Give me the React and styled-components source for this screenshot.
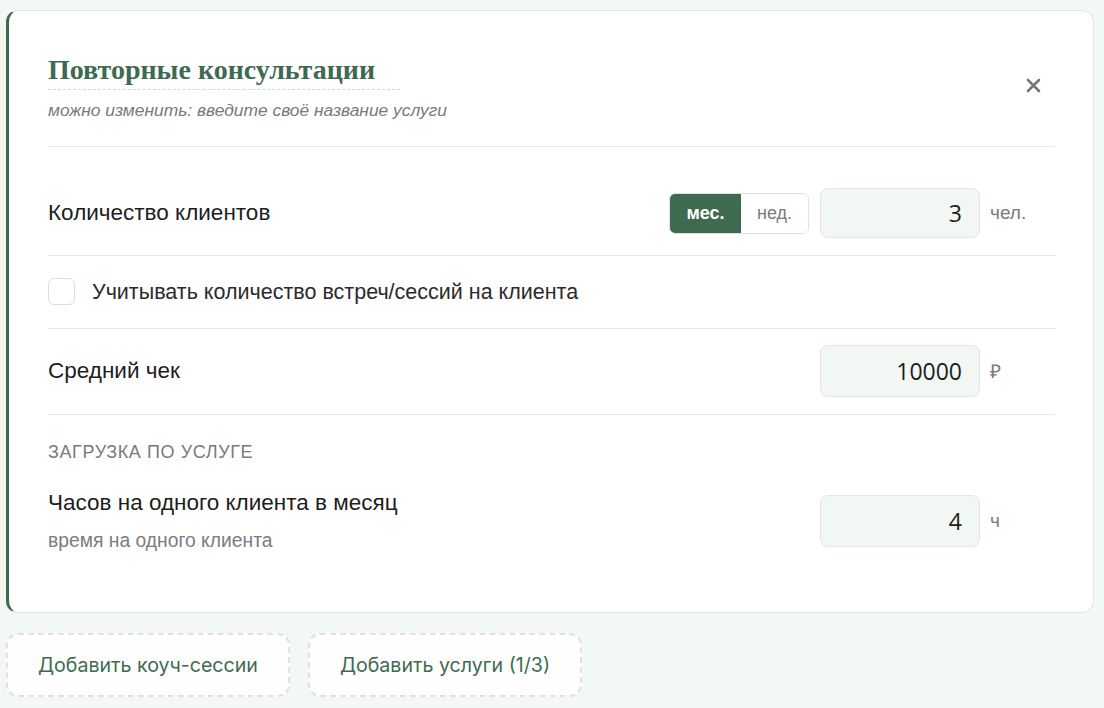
import styled, { createGlobalStyle } from 'styled-components';

const GREEN = '#3e6b50';

const GlobalStyle = createGlobalStyle`
	body {
		margin: 0;
		background: #f3f8f4;
		font-family: "Liberation Sans", Arial, sans-serif;
		color: #1d1d1d;
	}
`;

const Page = styled.div`
	padding: 10px 10px 12px 6px;
	display: flex;
	flex-direction: column;
	gap: 20px;
`;

const Card = styled.div`
	background: #fff;
	border: 1px solid #e1e7e2;
	border-left: 3px solid ${GREEN};
	border-radius: 12px;
	padding: 42px 38px 60px 39px;
`;

const Header = styled.div`
	display: flex;
	justify-content: space-between;
	align-items: center;
	padding-bottom: 26px;
	border-bottom: 1px solid #e4e7e5;
`;

const TitleBlock = styled.div`
	display: flex;
	flex-direction: column;
	gap: 10px;
`;

const Title = styled.div`
	width: 352px;
	white-space: nowrap;
	font-family: "Liberation Serif", "DejaVu Serif", serif;
	font-weight: 700;
	font-size: 28px;
	line-height: 34px;
	color: ${GREEN};
	border-bottom: 1px dashed #d6d9d7;
	padding-bottom: 2px;
`;

const Hint = styled.div`
	font-style: italic;
	font-size: 17.4px;
	line-height: 20px;
	color: #7a7a7a;
`;

const CloseButton = styled.button`
	border: none;
	background: none;
	padding: 0;
	margin-right: 14px;
	margin-top: -2px;
	cursor: pointer;
	display: flex;
`;

const Row = styled.div`
	display: flex;
	align-items: center;
	justify-content: space-between;
	padding: ${({ $pad }) => $pad || '16px 0 17px'};
	border-bottom: ${({ $last }) => ($last ? 'none' : '1px solid #e4e7e5')};
`;

const LabelBlock = styled.div`
	display: flex;
	flex-direction: column;
	gap: 14px;
`;

const Label = styled.div`
	font-size: 22.5px;
	line-height: 26px;
	color: #1d1d1d;
`;

const SubLabel = styled.div`
	font-size: 19.3px;
	line-height: 22px;
	color: #7c7c7c;
`;

const Controls = styled.div`
	display: flex;
	align-items: center;
	gap: 10px;
`;

const Toggle = styled.div`
	display: flex;
	border: 1px solid #e0e3e1;
	border-radius: 6px;
	overflow: hidden;
	height: 41px;
	box-sizing: border-box;
	margin-right: 1px;
`;

const ToggleOption = styled.button`
	border: none;
	width: ${({ $active }) => ($active ? '71px' : '67px')};
	background: ${({ $active }) => ($active ? GREEN : '#fff')};
	color: ${({ $active }) => ($active ? '#fff' : '#7a7a7a')};
	font-family: "Liberation Sans", Arial, sans-serif;
	font-size: 18px;
	font-weight: ${({ $active }) => ($active ? 700 : 400)};
	cursor: pointer;
`;

const NumberInput = styled.input`
	width: 160px;
	height: ${({ $h }) => $h || 52}px;
	box-sizing: border-box;
	border: 1px solid #e2e7e3;
	border-radius: 8px;
	background: #f2f7f3;
	text-align: right;
	padding: 0 17px;
	font-family: "Open Sans", "Liberation Sans", sans-serif;
	font-size: 23px;
	color: #1d1d1d;
	outline: none;
`;

const Unit = styled.span`
	width: 65px;
	font-size: 19px;
	color: #7a7a7a;
`;

const CheckLabel = styled.label`
	display: flex;
	align-items: center;
	gap: 17px;
	font-size: 21.5px;
	line-height: 26px;
	color: #2a2a2a;
	cursor: pointer;
`;

const CheckBox = styled.span`
	width: 27px;
	height: 27px;
	box-sizing: border-box;
	border: 1.5px solid #dcdfdd;
	border-radius: 6px;
	background: #fff;
`;

const SectionTitle = styled.div`
	padding-top: 27px;
	font-size: 18px;
	line-height: 21px;
	letter-spacing: 0.6px;
	text-transform: uppercase;
	color: #7a7a7a;
`;

const Actions = styled.div`
	display: flex;
	gap: 18px;
`;

const AddButton = styled.button`
	height: 64px;
	padding: 0 30px;
	background: #fdfefd;
	border: 2px dashed #dfe3e0;
	border-radius: 12px;
	color: ${GREEN};
	font-family: "Inter", "Liberation Sans", sans-serif;
	font-size: 19.6px;
	cursor: pointer;
`;

const CrossIcon = () => (
	<svg width="15" height="15" viewBox="0 0 15 15">
		<path d="M2 2 L13 13 M13 2 L2 13" stroke="#777" strokeWidth="2.6" strokeLinecap="round" />
	</svg>
);

export default function App() {
	return (
		<>
			<GlobalStyle />
			<Page>
				<Card>
					<Header>
						<TitleBlock>
							<Title>Повторные консультации</Title>
							<Hint>можно изменить: введите своё название услуги</Hint>
						</TitleBlock>
						<CloseButton aria-label="Удалить">
							<CrossIcon />
						</CloseButton>
					</Header>

					<Row $pad="41px 0 17px">
						<Label>Количество клиентов</Label>
						<Controls>
							<Toggle>
								<ToggleOption $active>мес.</ToggleOption>
								<ToggleOption>нед.</ToggleOption>
							</Toggle>
							<NumberInput defaultValue="3" $h={50} />
							<Unit>чел.</Unit>
						</Controls>
					</Row>

					<Row $pad="22px 0 23px">
						<CheckLabel>
							<CheckBox />
							Учитывать количество встреч/сессий на клиента
						</CheckLabel>
					</Row>

					<Row>
						<Label>Средний чек</Label>
						<Controls>
							<NumberInput defaultValue="10000" />
							<Unit>₽</Unit>
						</Controls>
					</Row>

					<SectionTitle>Загрузка по услуге</SectionTitle>

					<Row $pad="27px 0 0" $last>
						<LabelBlock>
							<Label>Часов на одного клиента в месяц</Label>
							<SubLabel>время на одного клиента</SubLabel>
						</LabelBlock>
						<Controls>
							<NumberInput defaultValue="4" />
							<Unit>ч</Unit>
						</Controls>
					</Row>
				</Card>

				<Actions>
					<AddButton>Добавить коуч-сессии</AddButton>
					<AddButton>Добавить услуги (1/3)</AddButton>
				</Actions>
			</Page>
		</>
	);
}
